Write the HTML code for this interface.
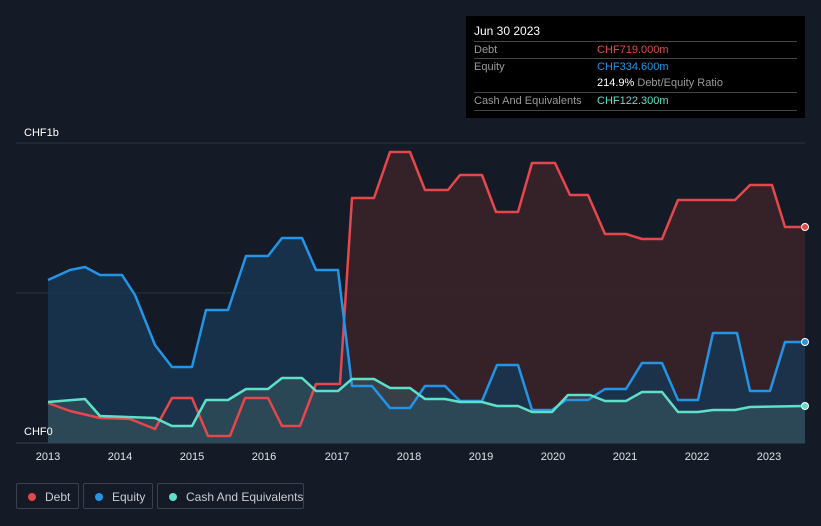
<!DOCTYPE html>
<html><head><style>
html,body{margin:0;background:#151b26;width:821px;height:526px;overflow:hidden;font-family:"Liberation Sans",sans-serif;}
.tt{position:absolute;left:466px;top:16px;width:339px;height:102px;background:#000;color:#fff;font-size:11px;}
.tt .r{position:absolute;left:8px;right:8px;border-top:1px solid #444;height:17px;line-height:17px;color:#999;white-space:nowrap;}
.tt .v{position:absolute;left:123px;}
.lg{position:absolute;top:483px;height:26px;border:1px solid #3a404c;border-radius:2px;color:#c8cbd0;font-size:12px;line-height:26px;box-sizing:border-box;white-space:nowrap;}
.lg i{position:absolute;left:11px;top:9px;width:8px;height:8px;border-radius:50%;}
</style></head><body>
<svg width="821" height="526" style="position:absolute;left:0;top:0">
<line x1="16" y1="143" x2="805" y2="143" stroke="#2c323d"/>
<line x1="16" y1="293" x2="805" y2="293" stroke="#2c323d"/>
<line x1="16" y1="443" x2="805" y2="443" stroke="#3a404c"/>
<polygon fill="#3b2229" fill-opacity="0.85" points="48,403 70,411 100,418 130,419 155,429 172,398 192,398 208,436 230,436 245,398 268,398 282,426 300,426 316,384 340,384 352,198 374,198 390,152 410,152 425,190 448,190 460,175 482,175 496,212 518,212 532,163 555,163 570,195 588,195 605,234 626,234 642,239 662,239 678,200 735,200 750,185 772,185 785,227 805,227 805,443 48,443"/>
<polygon fill="#173752" fill-opacity="0.8" points="48,280 70,270 85,267 100,275 122,275 135,295 155,345 172,367 192,367 206,310 228,310 246,256 268,256 282,238 302,238 316,270 338,270 352,386 372,386 390,408 410,408 425,386 445,386 460,401 482,401 497,365 518,365 532,410 552,410 566,400 588,400 605,389 626,389 642,363 662,363 678,400 698,400 713,333 737,333 750,391 770,391 785,342 805,342 805,443 48,443"/>
<polygon fill="#3a5a5e" fill-opacity="0.55" points="48,402 85,399 100,416 155,418 172,426 192,426 206,400 228,400 246,389 268,389 282,378 302,378 316,391 338,391 352,379 374,379 390,388 410,388 425,399 445,399 460,402 482,402 497,406 518,406 532,412 552,412 568,395 590,395 605,401 626,401 642,392 662,392 678,412 698,412 713,410 735,410 750,407 805,406 805,443 48,443"/>
<polyline fill="none" stroke="#e5474c" stroke-width="2.5" stroke-linejoin="round" points="48,403 70,411 100,418 130,419 155,429 172,398 192,398 208,436 230,436 245,398 268,398 282,426 300,426 316,384 340,384 352,198 374,198 390,152 410,152 425,190 448,190 460,175 482,175 496,212 518,212 532,163 555,163 570,195 588,195 605,234 626,234 642,239 662,239 678,200 735,200 750,185 772,185 785,227 805,227"/>
<polyline fill="none" stroke="#2394e6" stroke-width="2.5" stroke-linejoin="round" points="48,280 70,270 85,267 100,275 122,275 135,295 155,345 172,367 192,367 206,310 228,310 246,256 268,256 282,238 302,238 316,270 338,270 352,386 372,386 390,408 410,408 425,386 445,386 460,401 482,401 497,365 518,365 532,410 552,410 566,400 588,400 605,389 626,389 642,363 662,363 678,400 698,400 713,333 737,333 750,391 770,391 785,342 805,342"/>
<polyline fill="none" stroke="#5ee0c8" stroke-width="2.5" stroke-linejoin="round" points="48,402 85,399 100,416 155,418 172,426 192,426 206,400 228,400 246,389 268,389 282,378 302,378 316,391 338,391 352,379 374,379 390,388 410,388 425,399 445,399 460,402 482,402 497,406 518,406 532,412 552,412 568,395 590,395 605,401 626,401 642,392 662,392 678,412 698,412 713,410 735,410 750,407 805,406"/>
<circle cx="805" cy="227" r="3.5" fill="#e5474c" stroke="#fff" stroke-width="1"/>
<circle cx="805" cy="342" r="3.5" fill="#2394e6" stroke="#fff" stroke-width="1"/>
<circle cx="805" cy="406" r="3.5" fill="#5ee0c8" stroke="#fff" stroke-width="1"/>
<g fill="#fff" font-size="11" font-family="Liberation Sans">
<text x="24" y="136">CHF1b</text><text x="24" y="435">CHF0</text>
</g>
<g fill="#e0e3e8" font-size="11" font-family="Liberation Sans" text-anchor="middle">
<text x="48" y="460">2013</text><text x="120" y="460">2014</text><text x="192" y="460">2015</text><text x="264" y="460">2016</text><text x="337" y="460">2017</text><text x="409" y="460">2018</text><text x="481" y="460">2019</text><text x="553" y="460">2020</text><text x="625" y="460">2021</text><text x="697" y="460">2022</text><text x="769" y="460">2023</text>
</g>
</svg>
<div class="tt">
<div style="position:absolute;left:8px;top:8px;font-size:12px">Jun 30 2023</div>
<div class="r" style="top:25px">Debt<span class="v" style="color:#e5474c">CHF719.000m</span></div>
<div class="r" style="top:42px">Equity<span class="v" style="color:#2394e6">CHF334.600m</span></div>
<div class="r" style="top:59px;border-top:none"><span class="v"><b style="color:#fff;font-weight:normal">214.9%</b> Debt/Equity Ratio</span></div>
<div class="r" style="top:76px">Cash And Equivalents<span class="v" style="color:#5ee0c8">CHF122.300m</span></div>
<div class="r" style="top:94px;height:0"></div>
</div>
<div class="lg" style="left:16px;width:63px"><i style="background:#e5474c"></i><span style="position:absolute;left:28px">Debt</span></div>
<div class="lg" style="left:83px;width:70px"><i style="background:#2394e6"></i><span style="position:absolute;left:28px">Equity</span></div>
<div class="lg" style="left:157px;width:147px"><i style="background:#5ee0c8"></i><span style="position:absolute;left:28px">Cash And Equivalents</span></div>
</body></html>
